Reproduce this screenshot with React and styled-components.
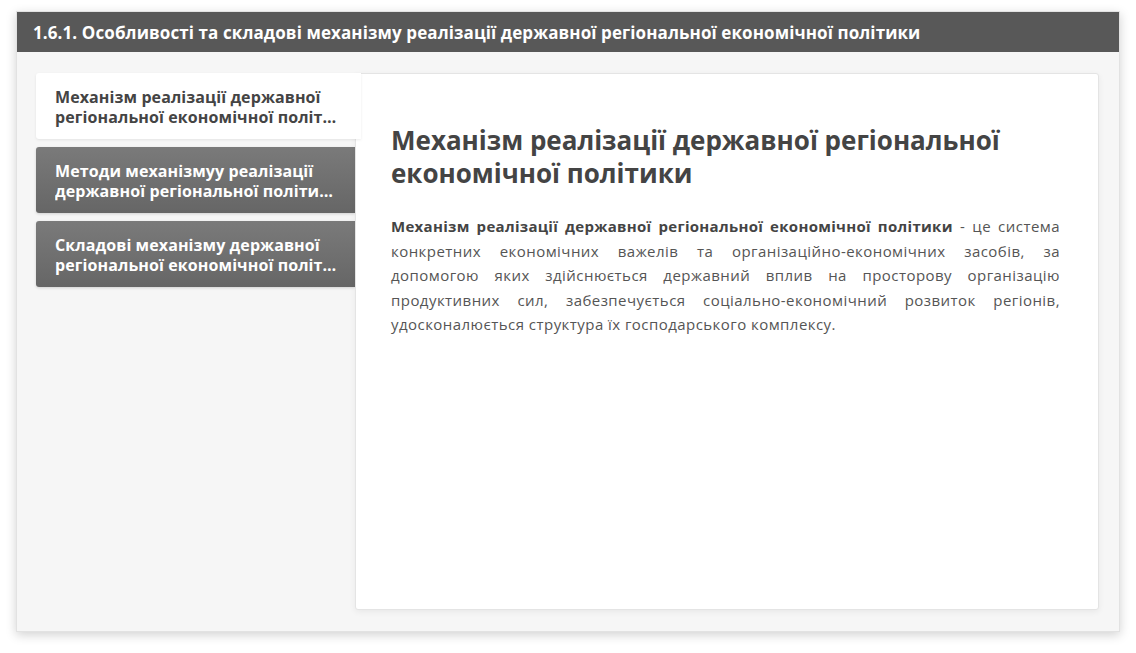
import React, { useState } from "react";
import styled, { createGlobalStyle } from "styled-components";

const GlobalStyle = createGlobalStyle`
  html, body {
    margin: 0;
    padding: 0;
    background: #ffffff;
    font-family: "Open Sans", "Noto Sans", sans-serif;
  }
`;

const Page = styled.div`
  width: 1136px;
  height: 653px;
  padding: 11px 16px 0 16px;
  box-sizing: border-box;
`;

const Card = styled.div`
  width: 1104px;
  height: 621px;
  display: flex;
  flex-direction: column;
  background-color: #f6f6f6;
  box-shadow: 0 3px 10px rgba(0, 0, 0, 0.18);
  border: 1px solid #e2e2e2;
  box-sizing: border-box;
`;

const Header = styled.div`
  height: 40px;
  flex-shrink: 0;
  display: flex;
  align-items: center;
  padding: 0 16px;
  background-color: #585858;
  color: #ffffff;
  font-size: 17px;
  letter-spacing: 0.1px;
  font-weight: 700;
  white-space: nowrap;
`;

const Body = styled.div`
  flex: 1;
  display: flex;
  padding: 21px 20px 21px 19px;
  min-height: 0;
`;

const Tabs = styled.div`
  width: 319px;
  flex-shrink: 0;
  display: flex;
  flex-direction: column;
  gap: 8px;
`;

const Tab = styled.button`
  all: unset;
  box-sizing: border-box;
  height: 66px;
  padding: 13px 17px 11px 19px;
  font-size: 16px;
  line-height: 20px;
  letter-spacing: 0.1px;
  font-weight: 700;
  cursor: pointer;
  border-radius: 3px 0 0 3px;
  color: ${({ $active }) => ($active ? "#444444" : "#ffffff")};
  background: ${({ $active }) =>
    $active ? "#ffffff" : "linear-gradient(#7a7a7a, #666666)"};
  box-shadow: ${({ $active }) =>
    $active ? "0 1px 3px rgba(0,0,0,0.08)" : "0 1px 3px rgba(0,0,0,0.15)"};
  margin-right: ${({ $active }) => ($active ? "-6px" : "0")};
  position: relative;
  z-index: ${({ $active }) => ($active ? 2 : 0)};
`;

const TabLine = styled.span`
  display: block;
  white-space: nowrap;
  overflow: hidden;
  text-overflow: ellipsis;
  max-width: 283px;
`;

const Panel = styled.div`
  flex: 1;
  background-color: #ffffff;
  border: 1px solid #e4e4e4;
  border-radius: 3px;
  box-shadow: 0 2px 6px rgba(0, 0, 0, 0.06);
  padding: 50px 38px 20px 35px;
  position: relative;
  z-index: 1;
`;

const Title = styled.h2`
  margin: 0 0 24px;
  font-size: 26px;
  line-height: 33px;
  font-weight: 700;
  color: #444444;
`;

const Text = styled.p`
  margin: 0;
  font-size: 15px;
  line-height: 24.5px;
  color: #555555;
  text-align: justify;
  letter-spacing: 0.45px;

  b {
    color: #444444;
    font-weight: 700;
    letter-spacing: 0.3px;
  }
`;

const tabs = [
  ["Механізм реалізації державної", "регіональної економічної політики"],
  ["Методи механізмуу реалізації", "державної регіональної політики"],
  ["Складові механізму державної", "регіональної економічної політики"],
];

const App = () => {
  const [active, setActive] = useState(0);

  return (
    <Page>
      <GlobalStyle />
      <Card>
        <Header>
          1.6.1. Особливості та складові механізму реалізації державної
          регіональної економічної політики
        </Header>
        <Body>
          <Tabs>
            {tabs.map((lines, i) => (
              <Tab key={i} $active={i === active} onClick={() => setActive(i)}>
                {lines.map((l, j) => (
                  <TabLine key={j}>{l}</TabLine>
                ))}
              </Tab>
            ))}
          </Tabs>
          <Panel>
            <Title>Механізм реалізації державної регіональної економічної політики</Title>
            <Text>
              <b>Механізм реалізації державної регіональної економічної політики</b>{" "}
              - це система конкретних економічних важелів та
              організаційно-економічних засобів, за допомогою яких здійснюється
              державний вплив на просторову організацію продуктивних сил,
              забезпечується соціально-економічний розвиток регіонів,
              удосконалюється структура їх господарського комплексу.
            </Text>
          </Panel>
        </Body>
      </Card>
    </Page>
  );
};

export default App;
